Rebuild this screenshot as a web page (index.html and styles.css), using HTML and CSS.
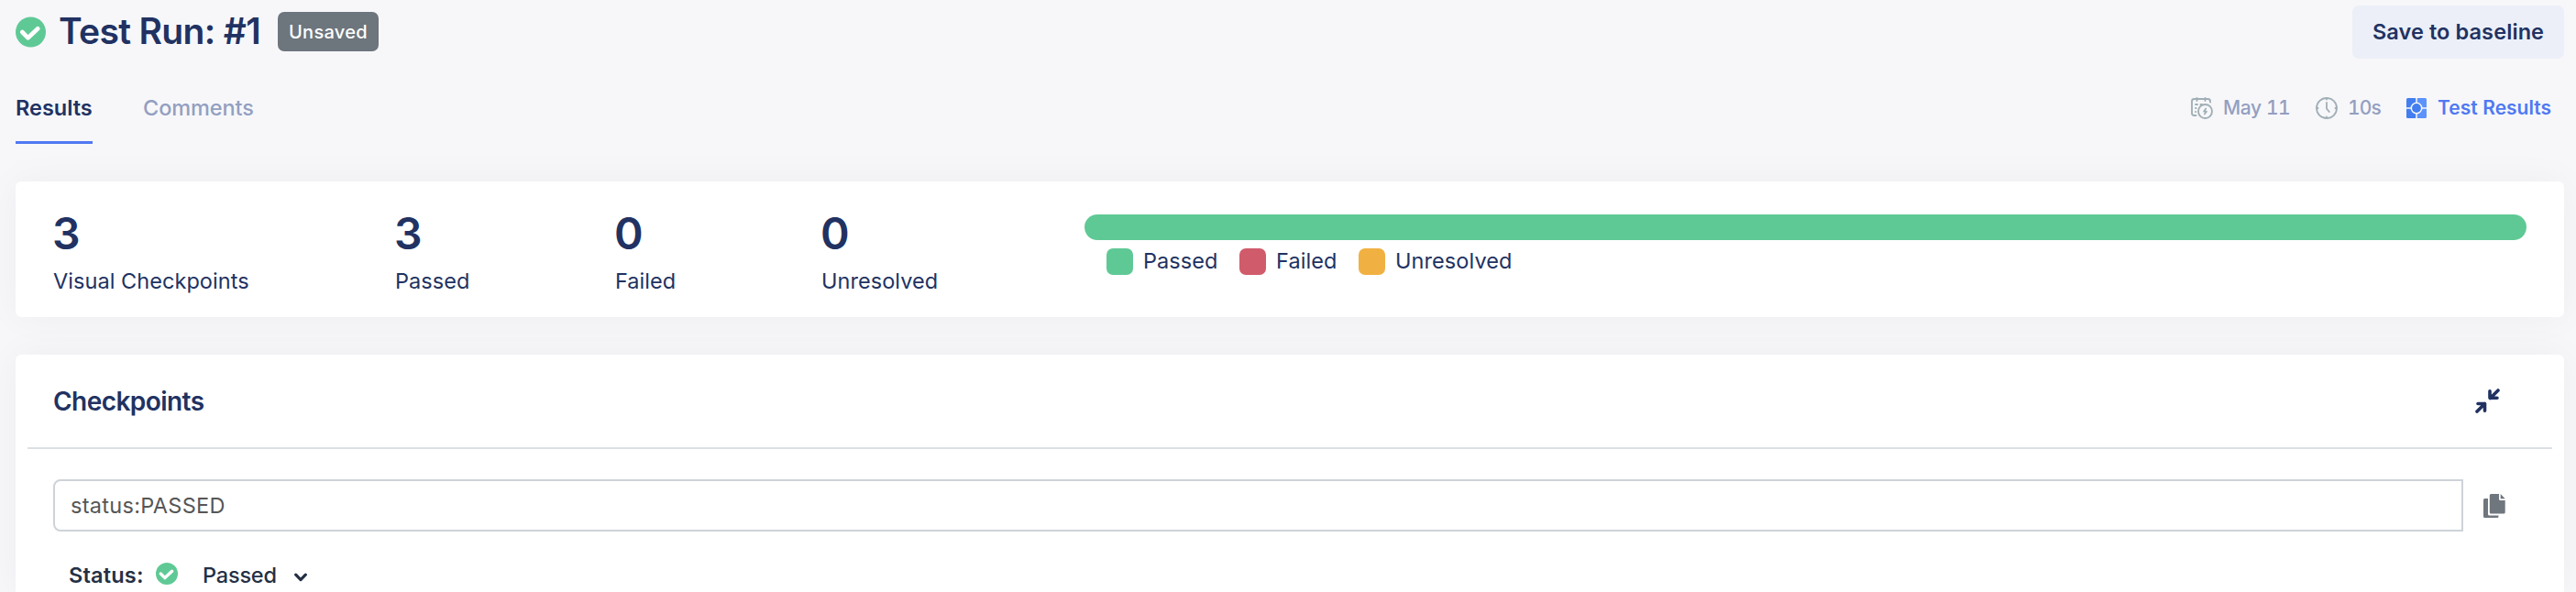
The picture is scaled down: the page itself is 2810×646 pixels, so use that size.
FILE: index.html
```html
<!DOCTYPE html>
<html lang="en">
<head>
<meta charset="utf-8">
<title>Test Run: #1</title>
<link rel="stylesheet" href="styles.css">
</head>
<body>
<svg width="0" height="0" class="defs">
  <symbol id="check" viewBox="0 0 34 34">
    <circle cx="17" cy="17" r="17" fill="#5fc995"/>
    <path d="M7.500 17l6.500 6.500L25 13.200" fill="none" stroke="#fff" stroke-width="4.800" stroke-linecap="round" stroke-linejoin="round"/>
  </symbol>
</svg>
<header class="header">
  <div class="heading">
    <svg class="heading-icon"><use href="#check"/></svg>
    <h1 class="title">Test Run: #1</h1>
    <span class="badge">Unsaved</span>
  </div>
  <button class="save">Save to baseline</button>
</header>
<nav class="nav">
  <div class="tabs">
    <a class="tab active">Results</a>
    <a class="tab">Comments</a>
  </div>
  <div class="meta">
    <svg class="ico-date" viewBox="0 0 24 24" fill="none" stroke="#a0afb6" stroke-width="1.900" stroke-linecap="round">
      <path d="M5.500 20H3.500Q1 20 1 17.500V4.500Q1 2 3.500 2H18.500Q21 2 21 4.500V5.500M6.500 1V4M15.500 1V4M5 8H7M10.500 8H12M5 12H5.500M5 16H5.200"/>
      <circle cx="15.500" cy="15.500" r="7.500"/>
      <path d="M16.200 12.500L14 15.700H17L14.800 18.600" stroke-width="1.700" stroke-linejoin="round"/>
    </svg>
    <span class="meta-text date">May 11</span>
    <svg class="ico-clock" viewBox="0 0 24 24" fill="none" stroke="#a0afb6" stroke-width="1.800" stroke-linecap="round">
      <circle cx="12" cy="12" r="11"/>
      <path d="M12 6V12.500L14.800 16M12 1.500V2.500M12 21.500V22.500M1.500 12H2.500M21.500 12H22.500"/>
    </svg>
    <span class="meta-text time">10s</span>
    <svg class="ico-suite" viewBox="0 0 22 22">
      <rect width="11" height="22" rx="1.500" fill="#437ef0"/><rect x="11" width="11" height="22" rx="1.500" fill="#5b93fb"/>
      <path d="M11 0V22M0 11H22" stroke="#f7f7fa" stroke-width="1.500"/>
      <circle cx="11" cy="11" r="5.700" fill="#437ef0" stroke="#f7f7fa" stroke-width="1.500"/>
    </svg>
    <a class="meta-link">Test Results</a>
  </div>
</nav>
<section class="card summary">
  <div class="stat s1"><b>3</b><span>Visual Checkpoints</span></div>
  <div class="stat s2"><b>3</b><span>Passed</span></div>
  <div class="stat s3"><b>0</b><span>Failed</span></div>
  <div class="stat s4"><b>0</b><span>Unresolved</span></div>
  <div class="chart">
    <div class="bar"></div>
    <div class="legend">
      <i class="swatch passed"></i><span class="l1">Passed</span>
      <i class="swatch failed"></i><span class="l2">Failed</span>
      <i class="swatch unresolved"></i><span>Unresolved</span>
    </div>
  </div>
</section>
<section class="card checkpoints">
  <div class="card-head">
    <h2 class="card-title">Checkpoints</h2>
    <svg class="ico-compress" viewBox="0 0 27 27" fill="none" stroke="#213262" stroke-width="3.600" stroke-linecap="round" stroke-linejoin="round">
      <path d="M25 2L16.500 10.500M16 2.800V10.200H24M2 25L10.500 16.500M3 16.500H10.500V24.200"/>
    </svg>
  </div>
  <div class="search">
    <div class="input">status:PASSED</div>
    <svg class="ico-copy" viewBox="0 0 24 26" fill="#70767e">
      <path d="M5 5V22Q5 23.500 6.500 23.500H16.500V24.500Q16.500 26 15 26H1.500Q0 26 0 24.500V6.500Q0 5 1.500 5Z"/>
      <path d="M17 0V5.500Q17 7 18.500 7H23.700V20Q23.700 21.500 22.200 21.500H8.300Q6.800 21.500 6.800 20V1.500Q6.800 0 8.300 0Z"/>
      <path d="M18.700 0L23.700 5.200H18.700Z"/>
    </svg>
  </div>
  <div class="filter">
    <span class="filter-label">Status:</span>
    <svg class="filter-icon"><use href="#check"/></svg>
    <span class="filter-value">Passed</span>
    <svg class="ico-chevron" viewBox="0 0 14 10" fill="none" stroke="#253045" stroke-width="3.200" stroke-linecap="round" stroke-linejoin="round"><path d="M1.700 2.200L7 7.600L12.300 2.200"/></svg>
  </div>
</section>
</body>
</html>
```
FILE: styles.css
```css
* { box-sizing: border-box; }
body { margin: 0; height: 646px; overflow: hidden; background: #f7f7fa; font-family: Inter, "Liberation Sans", sans-serif; font-size: 23.5px; line-height: 30px; color: #213262; }
.defs { position: absolute; }
svg { display: block; flex: none; }
h1, h2 { margin: 0; font-weight: 600; }
h1, h2, span, a { white-space: nowrap; }
.header { display: flex; justify-content: space-between; height: 79px; padding: 6px 13px 0 17px; }
.heading { display: flex; align-items: center; height: 58px; }
.heading-icon { width: 33px; height: 34px; }
.title { margin-left: 14px; width: 239px; font-size: 39px; line-height: 48px; padding-bottom: 2px; letter-spacing: -.65px; }
.badge { width: 110px; height: 43px; margin-top: -1px; border-radius: 7px; background: #6d757d; color: #fff; font-size: 20px; font-weight: 500; letter-spacing: .3px; display: flex; align-items: center; justify-content: center; }
.save { width: 231px; height: 58px; border: 0; border-radius: 7px; background: #eceff7; color: #213262; font: 600 23.5px/30px Inter, "Liberation Sans", sans-serif; letter-spacing: .1px; padding: 0; }
.nav { display: flex; justify-content: space-between; height: 78px; padding: 0 27px 0 17px; }
.tabs { display: flex; gap: 55px; }
.tab { display: flex; align-items: center; padding-top: 3px; border-bottom: 3px solid transparent; font-size: 23.5px; font-weight: 500; letter-spacing: -.1px; color: #939fc1; }
.tab.active { width: 84px; border-color: #5079f2; color: #213262; font-weight: 600; letter-spacing: 0; }
.meta { display: flex; align-items: center; font-size: 21px; color: #939fc1; font-weight: 500; font-variant-numeric: tabular-nums; }
.ico-date, .ico-clock { width: 24px; height: 24px; }
.ico-suite { width: 22px; height: 22px; }
.meta-text { margin-left: 11px; }
.date { width: 101px; letter-spacing: -.4px; }
.time { width: 64px; letter-spacing: -.8px; }
.meta-link { margin-left: 12px; width: 124px; color: #5079f2; font-weight: 600; }
.card { margin: 41px 13px 0 17px; border-radius: 6px; background: #fff; box-shadow: 0 0 42px rgba(30, 30, 40, .045); }
.summary { display: flex; height: 148px; padding: 36px 41px 0; }
.stat { display: flex; flex-direction: column; }
.stat b { font-size: 48px; font-weight: 600; line-height: 42px; margin-left: -1px; }
.stat span { margin-top: 16px; line-height: 30px; letter-spacing: .05px; }
.s1 { width: 373px; }
.s2 { width: 240px; }
.s3 { width: 225px; }
.s4 { width: 287px; }
.chart { flex: 1; }
.bar { height: 28px; border-radius: 14px; background: #5fc995; }
.legend { display: flex; align-items: center; margin: 9px 0 0 24px; height: 29px; }
.legend span { padding-bottom: 2px; letter-spacing: .08px; }
.swatch { width: 29px; height: 29px; border-radius: 7px; margin-right: 11px; flex: none; }
.passed { background: #5fc995; }
.failed { background: #d05b6b; }
.unresolved { background: #f1b142; }
.l1 { width: 105px; }
.l2 { width: 90px; }
.checkpoints { height: 259px; padding: 0 13px; border-radius: 6px 6px 0 0; }
.card-head { display: flex; align-items: center; justify-content: space-between; height: 103px; padding: 0 57px 0 28px; border-bottom: 2px solid #dce0e5; }
.card-title { font-size: 28px; line-height: 36px; letter-spacing: -.55px; }
.ico-compress { width: 27px; height: 27px; }
.search { display: flex; align-items: center; margin: 33px 0 0 28px; }
.input { width: 2629px; height: 57px; border: 2px solid #ced3d8; border-radius: 8px 0 0 8px; padding-left: 17px; display: flex; align-items: center; color: #565656; letter-spacing: .3px; }
.ico-copy { width: 24px; height: 26px; margin-left: 22px; }
.filter { display: flex; height: 30px; margin: 33px 0 0 45px; color: #253045; }
.filter-label { width: 95px; font-weight: 600; letter-spacing: .2px; }
.filter-icon { width: 24px; height: 24px; margin-top: 1px; }
.filter-value { margin-left: 27px; width: 100px; font-weight: 500; letter-spacing: -.2px; }
.ico-chevron { width: 14px; height: 10px; margin-top: 12px; }
```
